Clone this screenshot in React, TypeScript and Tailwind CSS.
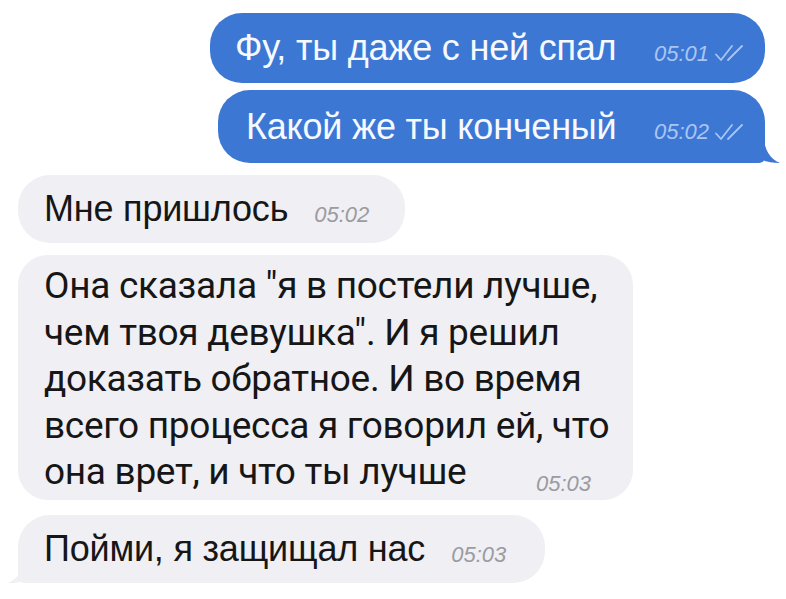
import React from "react";

const Checks = () => (
  <svg width="34" height="20" viewBox="0 0 34 20" className="inline-block ml-[4px]" fill="none" stroke="#a9c6f3" strokeWidth="1.8" strokeLinecap="round" strokeLinejoin="round">
    <path d="M3 11.5 L8 17 L19 3" />
    <path d="M15 17 L29 3" />
  </svg>
);

export default function App() {
  return (
    <div className="w-[786px] h-[599px] bg-white overflow-hidden relative" style={{ fontFamily: '"Liberation Sans", Arial, sans-serif' }}>
      <div className="flex flex-col pt-[13px]">
        {/* Blue 1 */}
        <div className="self-end mr-[21px] w-[555px] h-[70px] bg-[#3d77d4] rounded-[32px] flex items-center pl-[25px] pr-[18px]">
          <span className="text-[36px] text-[#f6f9ff] tracking-[-0.2px]">Фу, ты даже с ней спал</span>
          <span className="ml-auto flex items-center mt-[10px] text-[22px] italic text-[#a9c6f3]">05:01<Checks /></span>
        </div>
        {/* Blue 2 */}
        <div className="self-end mr-[21px] mt-[7px] w-[547px] h-[73px] bg-[#3d77d4] rounded-[32px] rounded-br-[6px] flex items-center pl-[28px] pr-[18px] relative">
          <span className="text-[36px] text-[#f6f9ff] tracking-[-0.2px]">Какой же ты конченый</span>
          <span className="ml-auto flex items-center mt-[10px] text-[22px] italic text-[#a9c6f3]">05:02<Checks /></span>
          <svg className="absolute right-[-15px] bottom-0" width="24" height="26" viewBox="0 0 24 26">
            <path d="M0 0 L8 0 C8 12 14 22 24 26 C14 26 6 24 0 20 Z" fill="#3d77d4" />
          </svg>
        </div>
        {/* Gray 1 */}
        <div className="self-start ml-[18px] mt-[12px] w-[387px] h-[68px] bg-[#efeff4] rounded-[32px] flex items-center pl-[26px]">
          <span className="text-[36px] text-[#161616] tracking-[-0.2px]">Мне пришлось</span>
          <span className="ml-[26px] mt-[10px] text-[22px] italic text-[#9b9ba1]">05:02</span>
        </div>
        {/* Gray 2 */}
        <div className="self-start ml-[18px] mt-[12px] w-[615px] h-[245px] bg-[#efeff4] rounded-[30px] pl-[26px] pt-[8px] relative" style={{ fontFamily: 'Roboto, "Liberation Sans", sans-serif' }}>
          <p className="text-[37px] leading-[46.5px] text-[#161616] tracking-[-0.3px]">
            Она сказала "я в постели лучше,<br />
            чем твоя девушка". И я решил<br />
            доказать обратное. И во время<br />
            всего процесса я говорил ей, что<br />
            она врет, и что ты лучше
          </p>
          <span className="absolute right-[42px] bottom-[0px] text-[22px] italic text-[#9b9ba1]" style={{ fontFamily: '"Liberation Sans", Arial, sans-serif' }}>05:03</span>
        </div>
        {/* Gray 3 */}
        <div className="self-start ml-[18px] mt-[15px] w-[527px] h-[68px] bg-[#efeff4] rounded-[32px] rounded-bl-[6px] flex items-center pl-[26px] relative">
          <span className="text-[36px] text-[#161616] tracking-[-0.2px]">Пойми, я защищал нас</span>
          <span className="ml-[26px] mt-[10px] text-[22px] italic text-[#9b9ba1]">05:03</span>
          <svg className="absolute left-[-10px] bottom-0" width="24" height="24" viewBox="0 0 24 24">
            <path d="M24 0 L16 0 C16 11 10 20 0 24 C10 24 18 22 24 18 Z" fill="#efeff4" />
          </svg>
        </div>
      </div>
    </div>
  );
}
